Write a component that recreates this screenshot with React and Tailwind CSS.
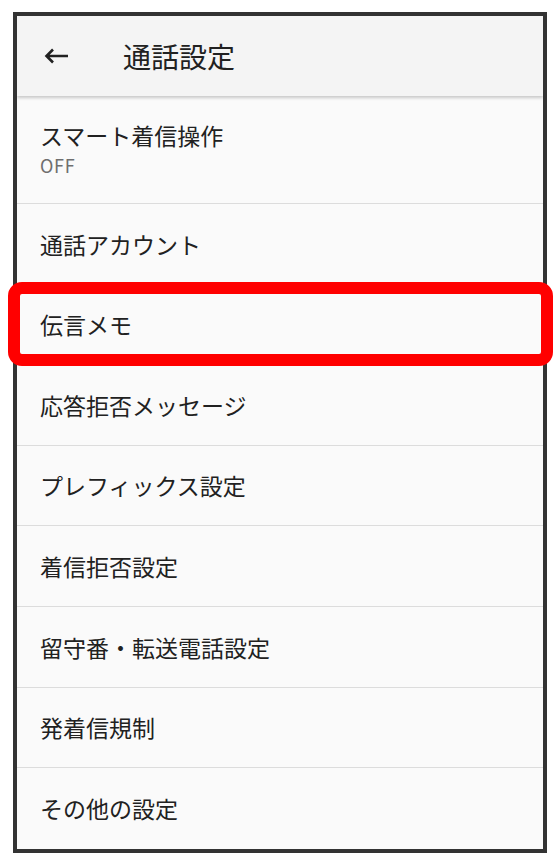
import React from "react";

const items = [
  "通話アカウント",
  "伝言メモ",
  "応答拒否メッセージ",
  "プレフィックス設定",
  "着信拒否設定",
  "留守番・転送電話設定",
  "発着信規制",
  "その他の設定",
];

export default function App() {
  return (
    <div
      className="relative w-[560px] h-[865px] bg-white pt-[12px] pl-[13px]"
      style={{ fontFamily: '"Noto Sans CJK JP", "Noto Sans", sans-serif' }}
    >
      <div className="w-[534px] h-[841px] border-4 border-[#333333] bg-[#fafafa] flex flex-col overflow-hidden">
        <div className="h-[80px] bg-[#f4f4f4] flex items-center shrink-0 shadow-[0_2px_3px_rgba(0,0,0,0.2)] relative z-10">
          <svg width="25" height="16" viewBox="0 0 25 16" className="ml-[27px]">
            <path d="M24 8H2.5M9 1.5L2.5 8L9 14.5" fill="none" stroke="#212121" strokeWidth="2.6" strokeLinecap="butt" strokeLinejoin="miter" />
          </svg>
          <div className="ml-[54px] text-[28px] text-[#212121] leading-none">通話設定</div>
        </div>
        <div className="h-[108px] shrink-0 flex flex-col pl-[23px] pt-[24px] border-b border-[#dcdcdc]">
          <div className="text-[23px] leading-[30px] text-[#212121]">スマート着信操作</div>
          <div className="mt-[3px] text-[18px] leading-[24px] tracking-[0.04em] text-[#6f6f6f]">
            OFF
          </div>
        </div>
        {items.map((t, i) => (
          <div
            key={t}
            className={
              "h-[80.6px] shrink-0 flex items-center pl-[23px] text-[23px] text-[#212121] " +
              (i < items.length - 1 ? "border-b border-[#dcdcdc]" : "")
            }
          >
            {t}
          </div>
        ))}
      </div>
      <div className="absolute left-[8px] top-[282px] w-[545px] h-[84px] border-[12px] border-[#ff0000] rounded-[14px]" />
    </div>
  );
}
